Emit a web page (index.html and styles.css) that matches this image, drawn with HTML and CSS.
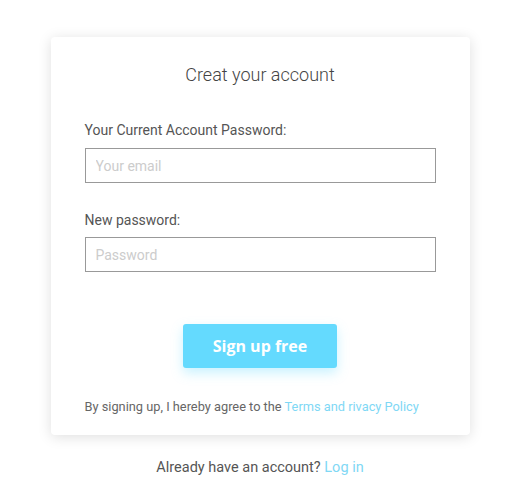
FILE: index.html
```html
<!DOCTYPE html>
<html lang="en">
<head>
    <meta charset="UTF-8">
    <meta name="viewport" content="width=device-width, initial-scale=1.0">
    <title>Create account</title>
    <link rel="stylesheet" href="styles.css">
</head>
<body>
    <div class="page">
        <div class="card">
            <h1>Creat your account</h1>
            <form class="signup-form">
                <label for="email">Your Current Account Password:</label>
                <input type="text" id="email" placeholder="Your email">
                <label for="password" class="second">New password:</label>
                <input type="password" id="password" placeholder="Password">
                <div class="actions">
                    <button type="button">Sign up free</button>
                </div>
            </form>
            <p class="terms">By signing up, I hereby agree to the <a href="#">Terms and rivacy Policy</a></p>
        </div>
        <p class="login">Already have an account? <a href="#">Log in</a></p>
    </div>
</body>
</html>
```

FILE: styles.css
```css
body {
    margin: 0;
    padding: 0;
    background-color: #fff;
    font-family: Roboto, "Liberation Sans", sans-serif;
    color: #555;
}
.page {
    padding: 37px 9px 0 0;
}
.card {
    width: 419px;
    box-sizing: border-box;
    margin: 0 auto;
    padding: 27px 34px 20px;
    background-color: #fff;
    border-radius: 4px;
    box-shadow: 0 2px 14px rgba(0, 0, 0, 0.13);
}
.card h1 {
    margin: 0;
    font-size: 18px;
    font-weight: 300;
    line-height: 22px;
    text-align: center;
    color: #444;
}
.signup-form {
    display: flex;
    flex-direction: column;
    margin-top: 35px;
}
.signup-form label {
    font-size: 14px;
    line-height: 18px;
    color: #555;
    margin-bottom: 9px;
}
.signup-form label.second {
    margin-top: 28px;
    margin-bottom: 8px;
}
.signup-form input {
    height: 35px;
    box-sizing: border-box;
    padding: 0 10px;
    border: 1px solid #999;
    border-radius: 0;
    font-family: inherit;
    font-size: 14px;
    color: #555;
    outline: none;
}
.signup-form input::placeholder {
    color: #ccc;
}
.actions {
    display: flex;
    justify-content: center;
    margin-top: 52px;
}
.actions button {
    width: 154px;
    height: 44px;
    border: none;
    border-radius: 3px;
    background-color: #64dafe;
    color: #fff;
    font-family: "Open Sans", sans-serif;
    font-size: 16px;
    font-weight: 700;
    cursor: pointer;
    box-shadow: 0 5px 12px rgba(100, 218, 254, 0.35);
}
.terms {
    margin: 31px 0 0;
    font-size: 12.8px;
    line-height: 16px;
    color: #666;
}
.terms a, .login a {
    color: #7fd8f5;
    text-decoration: none;
}
.login {
    margin: 24px 0 0;
    font-size: 14.5px;
    line-height: 18px;
    text-align: center;
    color: #555;
}
```
